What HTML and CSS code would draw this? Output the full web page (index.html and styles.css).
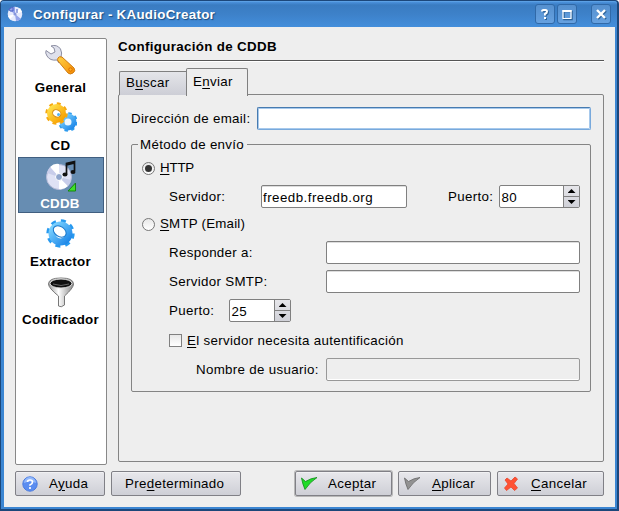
FILE: index.html
```html
<!DOCTYPE html>
<html lang="es">
<head>
<meta charset="utf-8">
<title>Configurar - KAudioCreator</title>
<link rel="stylesheet" href="styles.css">
</head>
<body>
<div class="window">
  <header class="titlebar">
    <svg class="app-icon" width="16" height="16" viewBox="0 0 16 16">
      <circle cx="8" cy="8" r="7.300" fill="#e6ebfd"/>
      <path d="M8 8L2 4Q4 1 8 1zM8 8l6 5q-2 2-5 2z" fill="#94a4ea"/>
      <path d="M8 8l5-6 2 4zM8 8l-5 5-2-3z" fill="#fff"/>
      <path d="M2 3l4-2v4H3zM10 3v4" stroke="#4a60c4" fill="none"/>
      <circle cx="8" cy="8" r="1.600" fill="#8797dc"/>
    </svg>
    <h1 class="title">Configurar - KAudioCreator</h1>
    <span class="winbtn"><svg width="18" height="18" viewBox="0 0 18 18"><path d="M6.500 6.500Q6.500 5 8 5h1.500q1.500 0 1.500 1.500T9 9v1.500M9 12v2" transform="translate(1 1)" stroke="#2d6297" fill="none" stroke-width="2"/><path d="M6 6.500Q6 5 7.500 5h2q1.500 0 1.500 1.500T9 9v1.500M9 12v2" fill="none" stroke="#fff" stroke-width="2"/></svg></span>
    <span class="winbtn"><svg width="18" height="18" viewBox="0 0 18 18"><path d="M6 6.500h8v8H6z" fill="none" stroke="#2d6297" stroke-width="1.500"/><path d="M5 5.500h8v8H5z" fill="none" stroke="#fff" stroke-width="1.200"/><path d="M4.500 5h9v2h-9z" fill="#fff"/></svg></span>
    <span class="winbtn close"><svg width="18" height="18" viewBox="0 0 18 18"><path d="M6 6l8 8M14 6l-8 8" stroke="#2d6297" stroke-width="2.200"/><path d="M5 5l8 8M13 5l-8 8" stroke="#fff" stroke-width="2.400"/></svg></span>
  </header>
  <div class="body">
    <div class="columns">
      <nav class="sidebar">
        <a class="item"><svg width="32" height="32" viewBox="0 0 32 32">
          <defs><linearGradient id="or" x2="1" y2="1"><stop stop-color="#ffd34a"/><stop offset="1" stop-color="#f58b00"/></linearGradient>
          <linearGradient id="ye" x2="1" y2="1"><stop stop-color="#ffe04a"/><stop offset="1" stop-color="#f8a000"/></linearGradient>
          <linearGradient id="bl" x2="1" y2="1"><stop stop-color="#7fd4ff"/><stop offset="1" stop-color="#1c86e8"/></linearGradient>
          <linearGradient id="si" x2="1"><stop stop-color="#999"/><stop offset=".4" stop-color="#fff"/><stop offset="1" stop-color="#888"/></linearGradient></defs>
          <path d="M6 2q6-2 9.500 3 2 4 .5 8l2 2-4 4-2-3Q5 17 2 12 0 9 1 6.500L6 10l4-2-1-4z" fill="#dfe1ec" stroke="#8d8fa3"/>
          <path d="M13 14q1-2 4-1l12 11q2 3-1 5-3 2-5 0L13 17q-1-1 0-3z" fill="url(#or)" stroke="#cf7b12"/>
          <circle cx="25.500" cy="25.500" r="1.700" fill="#ffae22" stroke="#d96d00"/></svg><b>General</b></a>
        <a class="item"><svg width="32" height="32" viewBox="0 0 32 32">
          <circle cx="23" cy="20" r="8.300" fill="none" stroke="#2b9bee" stroke-width="3" stroke-dasharray="3.260 3.260"/>
          <circle cx="23" cy="20" r="6" fill="#eef8ff" stroke="url(#bl)" stroke-width="5"/>
          <circle cx="11.500" cy="11.500" r="9.700" fill="none" stroke="#f6a810" stroke-width="3" stroke-dasharray="3.810 3.810"/>
          <circle cx="11.500" cy="11.500" r="6.500" fill="none" stroke="url(#ye)" stroke-width="6"/>
          <ellipse cx="12" cy="11.500" rx="4.300" ry="3.500" fill="#fff" stroke="#d58a0d" transform="rotate(30 12 11)"/><circle cx="13.500" cy="12.500" r="1.500" fill="#4fb4f5"/></svg><b>CD</b></a>
        <a class="item selected"><svg width="32" height="32" viewBox="0 0 32 32">
          <circle cx="14" cy="17" r="12.500" fill="#dfe2f5" stroke="#b5bbd8"/>
          <path d="M14 17L5 7q4-4 9-3zM14 17l9 9q-4 4-9 3z" fill="#fff"/><path d="M14 17L2 13q1-4 3-6zM14 17l12 3q-1 4-3 6z" fill="#c8cdea"/>
          <circle cx="14" cy="17" r="3.500" fill="#8fa5cc" stroke="#fff"/>
          <path d="M21.500 14V3.500l8-2V11M21.500 5l8-2" fill="none" stroke="#111" stroke-width="1.700"/><ellipse cx="20" cy="14.500" rx="2.500" ry="2" fill="#111"/><ellipse cx="28" cy="12" rx="2.500" ry="2" fill="#111"/>
          <path d="M30.500 23v8H23z" fill="#3fe02a" stroke="#15850f"/></svg><b class="cddb">CDDB</b></a>
        <a class="item"><svg width="32" height="32" viewBox="0 0 32 32">
          <circle cx="15.500" cy="15.500" r="12.200" fill="none" stroke="#279af0" stroke-width="4" stroke-dasharray="4.790 4.790"/>
          <circle cx="15.500" cy="15.500" r="8.500" fill="none" stroke="url(#bl)" stroke-width="7"/>
          <ellipse cx="15" cy="13.500" rx="7" ry="5" transform="rotate(35 15 13)" fill="#fff" stroke="#1878cc"/></svg><b>Extractor</b></a>
        <a class="item"><svg width="32" height="32" viewBox="0 0 32 32">
          <path d="M3.500 8q0-6 12.500-6t12.500 6q0 4-9 12v9q-3.500 3-6 1V20Q3.500 12 3.500 8z" fill="url(#si)" stroke="#777"/>
          <ellipse cx="16" cy="7.500" rx="11" ry="4.500" fill="#111" stroke="#ddd"/><path d="M8 8q8 3 16 0" stroke="#666" fill="none"/></svg><b>Codificador</b></a>
      </nav>
      <main class="main">
        <h2 class="heading">Configuración de CDDB</h2>
        <div class="tabs"><span class="tab">B<u>u</u>scar</span><span class="tab active">E<u>n</u>viar</span></div>
        <section class="panel">
          <div class="row email"><label>Dirección de email:</label><span class="input focused"></span></div>
          <div class="group">
            <div class="legend"><span>Método de envío</span></div>
            <div class="row option"><span class="radio on"></span><label class="tight"><u>H</u>TTP</label></div>
            <div class="row field"><label class="lab-server">Servidor:</label><span class="input server">freedb.freedb.org</span><label class="lab-port">Puerto:</label><span class="spin wide"><span class="value">80</span><span class="steps"><i class="up"></i><i class="down"></i></span></span></div>
            <div class="row option second"><span class="radio"></span><label class="snug"><u>S</u>MTP (Email)</label></div>
            <div class="row field"><label class="lab-wide">Responder a:</label><span class="input"></span></div>
            <div class="row field next"><label class="lab-wide">Servidor SMTP:</label><span class="input"></span></div>
            <div class="row field next"><label class="lab-small">Puerto:</label><span class="spin"><span class="value">25</span><span class="steps"><i class="up"></i><i class="down"></i></span></span></div>
            <div class="row auth"><span class="check"></span><label><u>E</u>l servidor necesita autentificación</label></div>
            <div class="row field user"><label class="lab-user">Nombre de usuario:</label><span class="input disabled"></span></div>
          </div>
        </section>
      </main>
    </div>
    <footer class="buttons">
      <span class="button help"><svg width="16" height="16" viewBox="0 0 16 16"><circle cx="8" cy="8" r="7.200" fill="#5b8df0" stroke="#4a7be0"/><path d="M2 7a6 6 0 0 1 12 0q-6-3-12 0z" fill="#94b9fb"/><path d="M5.500 6Q5.500 4 8 4t2.500 2T8 9v.8M8 11v2" stroke="#fff" stroke-width="1.700" fill="none"/></svg><span>A<u>y</u>uda</span></span>
      <span class="button default"><span>Pre<u>d</u>eterminado</span></span>
      <span class="button ok"><svg width="16" height="16" viewBox="0 0 16 16"><path d="M.5 2L4.500 5.500Q10 2 16 1.500 9 6 4 13.500 1.500 8 .5 2z" fill="#1fdc27" stroke="#0b8c14" stroke-width=".8"/></svg><span>Acep<u>t</u>ar</span></span>
      <span class="button apply"><svg width="16" height="16" viewBox="0 0 16 16"><path d="M.5 2L4.500 5.500Q10 2 16 1.500 9 6 4 13.500 1.500 8 .5 2z" fill="#929292" stroke="#666" stroke-width=".8"/></svg><span><u>A</u>plicar</span></span>
      <span class="button cancel"><svg width="16" height="16" viewBox="0 0 16 16"><path d="M2 4l2-2 4 3 4-4 2.500 2L11 7.500l3.500 4.500-3 2.500L8 11l-4.500 3.500L1.500 12 5 8z" fill="#ff5133" stroke="#e8452c" stroke-width=".8"/></svg><span><u>C</u>ancelar</span></span>
    </footer>
  </div>
</div>
</body>
</html>
```
FILE: styles.css
```css
* { box-sizing: border-box; }
body { margin: 0; width: 619px; height: 511px; overflow: hidden; font: 13.33px/16px "Liberation Sans", Arial, sans-serif; letter-spacing: .32px; color: #000; background: #fff; }
svg { display: block; flex: none; }
label, .tab, .button, .title, .heading, b, .legend { white-space: nowrap; }
u { text-decoration: underline; text-underline-offset: 2px; text-decoration-thickness: 1px; }

.window { width: 619px; height: 511px; display: flex; flex-direction: column; border: 1px solid #1c477a; border-right-width: 2px; border-bottom-width: 2px; border-radius: 4px 4px 0 0; background: #3c86d2; padding: 0 2px 2px 3px; }
.titlebar { flex: none; height: 26px; margin: 0 -2px 0 -3px; padding: 3px 4px 0 6px; display: flex; align-items: flex-start; border-top: 1px solid #5ba0e4; border-radius: 3px 3px 0 0; background: linear-gradient(#4b91dc 0, #3a7cc1 3px, #3d81c9 12px, #438edb); }
.app-icon { margin-top: 1px; }
.title { margin: 2px 0 0 10px; flex: 1; font-size: 13.33px; line-height: 16px; font-weight: bold; color: #fff; text-shadow: 1px 1px 1px #1b4a7c; letter-spacing: .28px; }
.winbtn { width: 20px; height: 20px; margin-right: 2px; border: 1px solid #3069a8; border-radius: 3px; background: linear-gradient(#5590cf, #66a1e0); margin-top: -1px; }
.winbtn.close { margin-left: 12px; }

.body { flex: 1; min-height: 0; background: #eee; padding: 11px 10px 0 11px; display: flex; flex-direction: column; }
.columns { display: flex; gap: 11px; height: 427px; }
.sidebar { width: 92px; height: 427px; background: #fff; border: 1px solid #888; border-radius: 2px; padding: 2px 2px; }
.item { display: flex; flex-direction: column; align-items: center; width: 86px; height: 56px; margin-bottom: 2px; padding-top: 3px; letter-spacing: .25px; }
.item b { margin-top: 4px; margin-left: -1px; }
.item .cddb { margin-left: -2px; }
.selected { background: #678db2; color: #fff; border: 1px solid #415f80; padding-top: 2px; }

.main { width: 486px; }
.heading { margin: 0; height: 23px; font-size: 13.33px; line-height: 18px; letter-spacing: .34px; border-bottom: 1px solid #555; box-shadow: 0 1px #fff; }
.tabs { display: flex; align-items: flex-end; height: 34px; padding-left: 1px; }
.tab { height: 24px; width: 67px; border: 1px solid #808080; border-bottom: 0; border-right: 0; border-radius: 2px 0 0 0; padding: 3px 0 0 6px; background: linear-gradient(#e4e5e9, #cdced6); }
.tab.active { height: 28px; width: 62px; margin-bottom: -1px; border: 1px solid #808080; border-bottom: 0; border-radius: 2px 2px 0 0; background: #eee; position: relative; z-index: 1; padding-top: 5px; }
.panel { height: 368px; margin-top: -1px; border: 1px solid #848484; border-radius: 2px; padding: 12px; }
.row { display: flex; align-items: center; }
.tight { letter-spacing: -.2px; }
.snug { letter-spacing: .2px; }
.input { height: 23px; flex: 1; border: 1px solid #808080; border-radius: 2px; background: #fff; box-shadow: inset 0 1px #ddd; padding: 3px 0 0 1px; line-height: 18px; }
.input.focused { border-color: #477bb0 #78a9dc #78a9dc #477bb0; box-shadow: inset 0 0 0 1px #a7c9ec; }
.input.disabled { background: #eee; border-color: #989898; box-shadow: inset 0 -1px #fff; }
.email { height: 23px; }
.email label { width: 126px; }
.group { margin-top: 14px; height: 248px; border: 1px solid #848484; border-radius: 2px; padding: 0 10px; }
.legend { height: 16px; margin-top: -8px; margin-left: -4px; }
.legend span { display: inline-block; padding: 0 3px 0 2px; background: #eee; }
.option { height: 14px; margin-top: 8px; }
.option.second { margin-top: 9px; }
.radio { width: 13px; height: 13px; margin-right: 5px; border: 1px solid #777; border-radius: 50%; background: linear-gradient(#e8e8e8, #fff); display: grid; place-items: center; }
.radio.on::after { content: ""; width: 7px; height: 7px; background: #333; border-radius: 50%; }
.field { height: 23px; margin-top: 10px; padding-left: 27px; }
.field.next { margin-top: 6px; }
.lab-server { width: 92px; }
.input.server { width: 146px; flex: none; letter-spacing: .46px; }
.lab-port { width: 92px; padding-left: 41px; }
.lab-wide { width: 157px; }
.lab-small { width: 60px; }
.spin { width: 62px; height: 23px; display: flex; border: 1px solid #808080; border-radius: 2px; background: #fff; }
.spin.wide { width: 81px; }
.value { flex: 1; padding: 4px 0 0 1.5px; }
.steps { width: 16px; border-left: 1px solid #808080; display: grid; grid-template-rows: 10px 11px; background: linear-gradient(#e6e6ea, #d0d1d8); }
.steps i { display: grid; place-items: center; }
.steps i::after { content: ""; width: 8px; height: 4px; background: #000; }
.up::after { clip-path: polygon(50% 0, 100% 100%, 0 100%); }
.down { border-top: 1px solid #808080; }
.down::after { clip-path: polygon(0 0, 100% 0, 50% 100%); }
.auth { height: 14px; margin-top: 12px; padding-left: 27px; }
.check { width: 13px; height: 13px; margin-top: -1px; margin-right: 5px; border: 1px solid #808080; background: linear-gradient(#e8e8e8, #fff); }
.user { margin-top: 10px; }
.lab-user { width: 157px; padding-left: 27px; }

.buttons { display: flex; margin-top: 6px; }
.button { height: 25px; display: flex; align-items: center; border: 1px solid #808086; border-radius: 2px; background: linear-gradient(#e8e8ec, #cecfd6); box-shadow: inset 0 1px #f1f1f3; }
.help { width: 90px; padding-left: 6px; gap: 11px; }
.default { width: 130px; margin-left: 6px; padding-left: 13px; }
.ok { width: 97px; margin-left: 54px; padding-left: 5px; gap: 11px; box-shadow: 0 0 0 1px #b7b7b7, inset 0 1px #f1f1f3; }
.apply { width: 93px; margin-left: 6px; padding-left: 5px; gap: 12px; }
.cancel { width: 107px; margin-left: 6px; padding-left: 5px; gap: 12px; }
```
